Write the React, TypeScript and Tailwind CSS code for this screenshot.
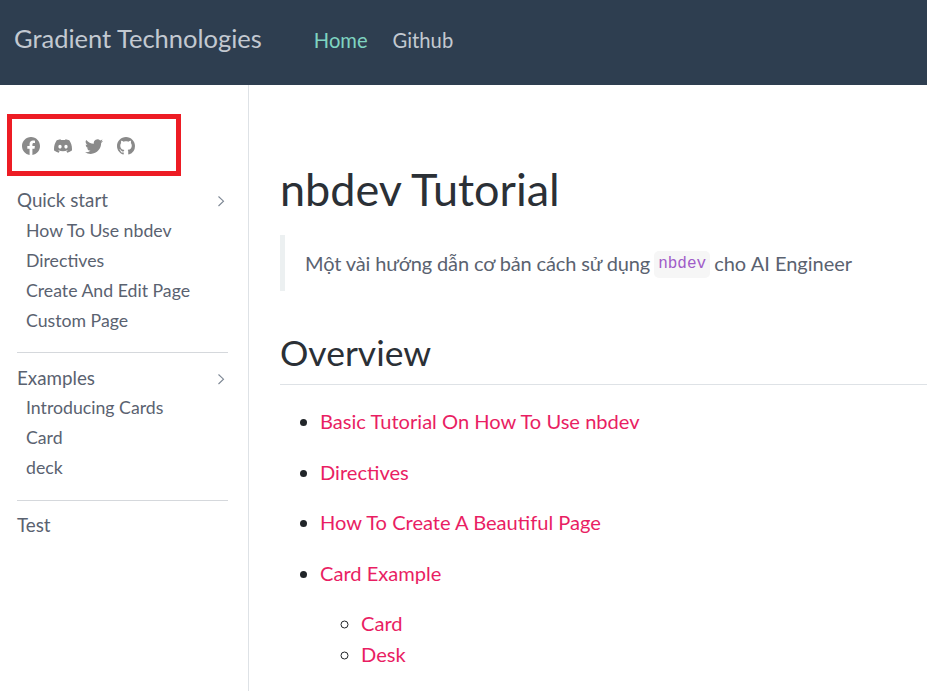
import { BsFacebook, BsDiscord, BsTwitter, BsGithub } from "react-icons/bs";

const Chevron = () => (
  <svg width="10" height="12" viewBox="0 0 10 12" fill="none" stroke="#7d8794" strokeWidth="1.1" className="mr-[2px] mt-[2px]">
    <path d="M2.5 1.5 7.5 6.2 2.5 11" />
  </svg>
);

const Section = ({ title, items, chevron = true, gap = "" }: { title: string; items: string[]; chevron?: boolean; gap?: string }) => (
  <div>
    <div className="flex h-[30px] items-center justify-between text-[18.8px] text-[#5a6270]">
      <span>{title}</span>
      {chevron && <Chevron />}
    </div>
    <div className={gap}>
      {items.map((t) => (
        <div key={t} className="flex h-[30px] items-center pl-[9px] text-[17.7px] text-[#5a6270]">
          {t}
        </div>
      ))}
    </div>
  </div>
);

export default function App() {
  return (
    <div className="h-[691px] w-[927px] overflow-hidden bg-white font-['Lato','sans-serif']">
      <header className="flex h-[85px] items-center bg-[#2e3e50] pl-[14px] pb-[8px]">
        <span className="text-[25.5px] text-[#c3c9d1]">Gradient Technologies</span>
        <nav className="ml-[52px] flex gap-[25px] pt-[3px] text-[20.2px]">
          <span className="text-[#7fd4c1]">Home</span>
          <span className="text-[#c3c9d1]">Github</span>
        </nav>
      </header>
      <div className="flex h-[606px]">
        <aside className="w-[249px] shrink-0 border-r border-[#dee2e6] pt-[29px]">
          <div className="ml-[7px] flex h-[62px] w-[174px] items-center gap-[13.7px] border-[5px] border-[#ed1c24] pl-[10px] pt-[2px] text-[18px] text-[#8a8a8a]">
            <BsFacebook />
            <BsDiscord />
            <BsTwitter />
            <BsGithub />
          </div>
          <div className="ml-[17px] mt-[9px] w-[211px]">
            <Section title="Quick start" gap="pt-[1px]" items={["How To Use nbdev", "Directives", "Create And Edit Page", "Custom Page"]} />
            <div className="mb-[10px] mt-[16px] border-t border-[#d5d8dc]" />
            <Section title="Examples" items={["Introducing Cards", "Card", "deck"]} />
            <div className="mb-[9px] mt-[17px] border-t border-[#d5d8dc]" />
            <Section title="Test" items={[]} chevron={false} />
          </div>
        </aside>
        <main className="min-w-0 flex-1 pl-[31px] pt-[71px]">
          <h1 className="text-[45px] leading-[66px] text-[#2b3036]">nbdev Tutorial</h1>
          <div className="mt-[13px] flex h-[56px] items-center border-l-[5px] border-[#ecf0f1] pl-[20px] text-[20px] text-[#5a6270]">
            <span className="tracking-[-0.13px]">Một vài hướng dẫn cơ bản cách sử dụng</span>
            <code className="mx-[4px] mt-[3px] rounded-[5px] bg-[#f6f6f6] px-[4px] font-['Liberation_Mono','monospace'] text-[16px] leading-[27px] text-[#a05cc8]">nbdev</code>
            <span>cho AI Engineer</span>
          </div>
          <h2 className="mt-[39px] border-b border-[#dee2e6] pb-[8px] text-[35.5px] leading-[46px] text-[#2b3036]">Overview</h2>
          <ul className="mt-[15px] list-disc pl-[40px] text-[20.1px] text-[#e91e63]">
            <li className="h-[50.5px] leading-[42px] marker:text-[#212529]">Basic Tutorial On How To Use nbdev</li>
            <li className="h-[50.5px] leading-[42px] marker:text-[#212529]">Directives</li>
            <li className="h-[50.5px] leading-[42px] marker:text-[#212529]">How To Create A Beautiful Page</li>
            <li className="leading-[42px] marker:text-[#212529]">
              Card Example
              <ul className="mt-[14px] list-[circle] pl-[41px]">
                <li className="h-[31px] leading-[31px] marker:text-[#212529]">Card</li>
                <li className="h-[31px] leading-[31px] marker:text-[#212529]">Desk</li>
              </ul>
            </li>
          </ul>
        </main>
      </div>
    </div>
  );
}
